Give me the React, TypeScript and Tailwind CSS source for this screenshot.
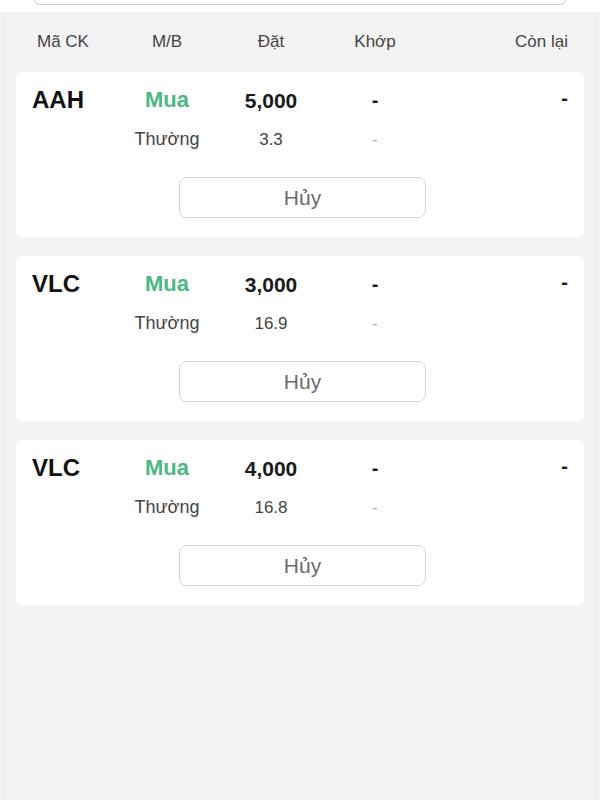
const orders = [
  { code: "AAH", side: "Mua", qty: "5,000", type: "Thường", price: "3.3" },
  { code: "VLC", side: "Mua", qty: "3,000", type: "Thường", price: "16.9" },
  { code: "VLC", side: "Mua", qty: "4,000", type: "Thường", price: "16.8" },
];

const cols = "grid grid-cols-[83px_104px_104px_104px_1fr]";

const OrderCard = ({ order }: { order: (typeof orders)[number] }) => {
  return (
    <div className="bg-white rounded-md px-4 pt-[14px] pb-[19px]">
      <div className={`${cols} h-[28px] items-center`}>
        <span className="text-[24px] font-bold text-[#111] leading-none">{order.code}</span>
        <span className="text-center text-[22px] font-bold text-[#4cb885] leading-none">{order.side}</span>
        <span className="text-center text-[21px] font-bold text-[#1a1a1a] leading-none">{order.qty}</span>
        <span className="text-center text-[20px] font-bold text-[#1a1a1a] leading-none">-</span>
        <span className="text-right text-[20px] font-bold text-[#1a1a1a] leading-none -mt-1">-</span>
      </div>
      <div className={`${cols} h-[24px] mt-3 items-center`}>
        <span />
        <span className="text-center text-[18px] text-[#444]">{order.type}</span>
        <span className="text-center text-[17px] text-[#444]">{order.price}</span>
        <span className="text-center text-[16px] text-[#aaa]">-</span>
        <span />
      </div>
      <div className="flex mt-[27px] pl-[147px]">
        <button className="w-[247px] h-[41px] rounded-lg border border-[#d6d6d6] bg-white text-[21px] text-[#6b6b6b] leading-none">
          Hủy
        </button>
      </div>
    </div>
  );
};

export default function App() {
  return (
    <div className="w-[600px] h-[800px] bg-[#f3f3f3] overflow-hidden font-['Liberation_Sans',Arial,sans-serif]">
      <div className="h-[12px] bg-white overflow-hidden">
        <div className="mx-[33px] h-[20px] -mt-[15px] rounded-lg border border-[#c9c9c9] bg-white" />
      </div>
      <div className="h-full mx-[3px] border-x border-[#ebebeb]">
        <div className="mx-[12px] px-4">
          <div className={`${cols} h-[60px] items-center text-[17px] text-[#444]`}>
            <span className="pl-[5px]">Mã CK</span>
            <span className="text-center">M/B</span>
            <span className="text-center">Đặt</span>
            <span className="text-center">Khớp</span>
            <span className="text-right">Còn lại</span>
          </div>
        </div>
        <div className="mx-[12px] flex flex-col gap-[19px]">
          {orders.map((o, i) => (
            <OrderCard key={i} order={o} />
          ))}
        </div>
      </div>
    </div>
  );
}
